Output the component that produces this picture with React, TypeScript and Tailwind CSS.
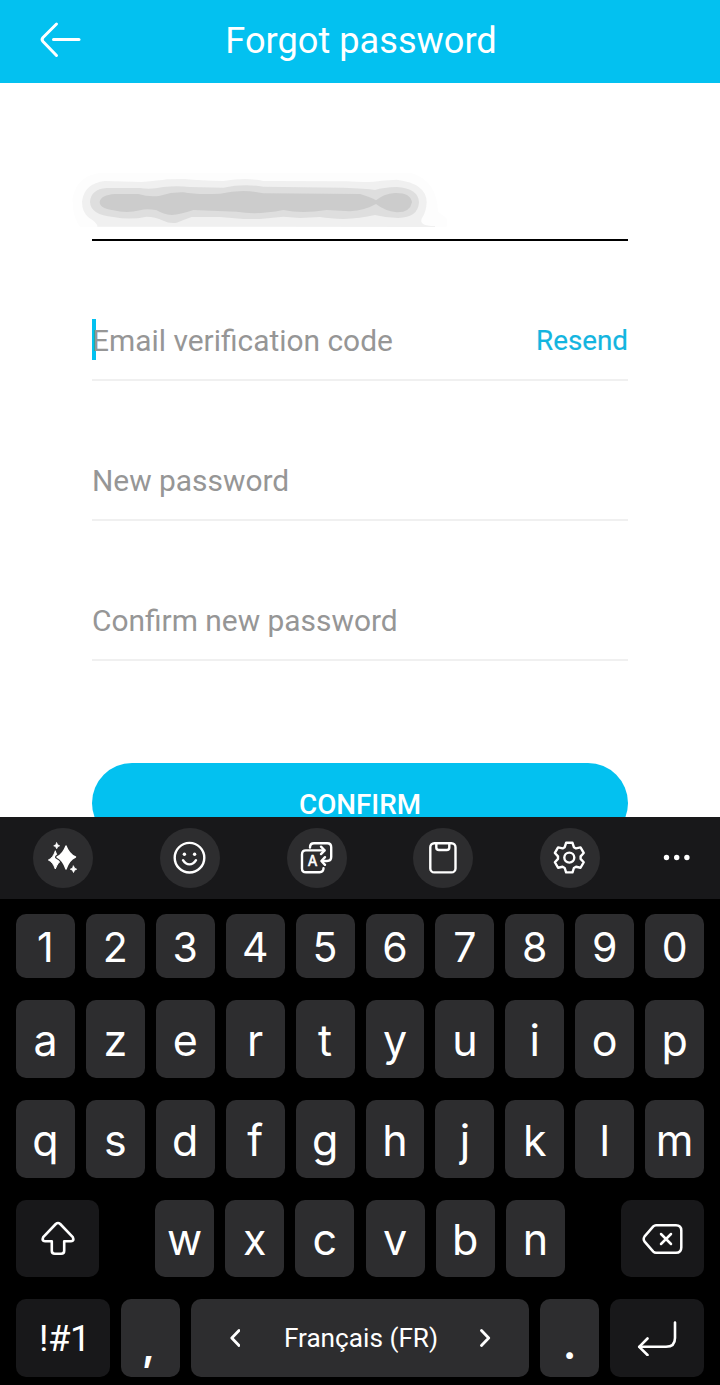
import type { ReactNode } from "react";

const numberRow = ["1", "2", "3", "4", "5", "6", "7", "8", "9", "0"];
const topRow = ["a", "z", "e", "r", "t", "y", "u", "i", "o", "p"];
const homeRow = ["q", "s", "d", "f", "g", "h", "j", "k", "l", "m"];
const bottomRow = ["w", "x", "c", "v", "b", "n"];

// one tooth of the cog, turned six times around the centre
const tooth = [
  [-4.6, -10.4],
  [-3.2, -14.8],
  [3.2, -14.8],
  [4.6, -10.4],
];

const cogPoints = [0, 60, 120, 180, 240, 300]
  .flatMap((deg) => {
    const a = (deg * Math.PI) / 180;
    return tooth.map(
      ([x, y]) =>
        `${(x * Math.cos(a) - y * Math.sin(a)).toFixed(2)},${(x * Math.sin(a) + y * Math.cos(a)).toFixed(2)}`
    );
  })
  .join(" ");

const Header = () => (
  <header className="flex h-[83px] shrink-0 items-center bg-[#03c1f0] text-white">
    <div className="flex w-[120px] pl-[38px]">
      <svg width="44" height="40" viewBox="0 0 44 40" className="-mt-1" fill="none" stroke="white" strokeWidth="3" strokeLinecap="round" strokeLinejoin="round">
        <path d="M18.5 4 L5 17.5 Q3.2 19.5 5 21.5 L18.5 35.5" />
        <path d="M15.5 19.5 H41" />
      </svg>
    </div>
    <h1 className="flex-1 pl-0.5 text-center text-[36.2px] leading-none">Forgot password</h1>
    <div className="w-[120px]" />
  </header>
);

const HiddenEmail = () => (
  <svg width="400" height="70" viewBox="0 0 1200 210" className="-ml-8 shrink-0">
    <path fill="#fdfdfd" d="M60 200 Q36 170 38 115 Q50 45 125 38 L1050 38 Q1132 60 1134 155 L1160 175 V200 Z" />
    <path fill="#f0f0f0" d="M112 200 Q112 188 88 174 Q66 158 66 125 Q72 70 135 63 L245 66 Q300 62 320 58 L375 57 Q420 62 490 63 Q525 57 555 57 Q585 58 610 63 L860 64 Q930 69 965 62 L1010 59 Q1100 70 1100 127 Q1099 155 1086 174 Q1074 198 1125 198 V201 Z" />
    <path fill="#dedede" d="M90 126 Q92 88 140 84 L240 84 Q270 90 310 81 Q350 76 390 81 L490 83 Q550 70 610 80 L850 83 Q920 85 945 90 Q970 82 1010 81 Q1075 85 1077 127 Q1074 173 1015 174 Q980 174 945 165 Q900 176 850 177 Q810 176 780 171 L720 174 L670 170 L600 177 L550 177 L480 171 L395 171 Q370 180 350 188 Q328 191 310 182 Q285 170 260 170 Q210 181 160 171 Q92 165 90 126 Z" />
    <path fill="#cccccc" d="M119 126 Q122 105 165 102 L235 102 Q270 112 300 107 Q335 96 370 97 Q410 105 480 101 Q550 86 610 100 L900 102 Q930 110 948 121 Q970 102 1005 99 Q1052 98 1056 127 Q1050 158 1010 157 Q975 153 948 132 Q915 151 870 154 L800 150 Q725 162 670 150 Q590 166 530 155 L400 150 Q360 164 335 165 Q310 163 290 151 Q260 144 240 151 Q200 161 160 151 Q119 145 119 126 Z" />
  </svg>
);

type FieldProps = {
  label: string;
  focused?: boolean;
  action?: string;
};

const Field = ({ label, focused, action }: FieldProps) => (
  <div className="relative flex h-[140px] shrink-0 items-end justify-between border-b-2 border-[#f0f0f0] pb-[18px] text-[29.9px] leading-[40px]">
    {focused && <span className="absolute bottom-[19px] left-0 h-[41px] w-1 bg-[#03c1f0]" />}
    <span className="relative text-[#969696]">{label}</span>
    {action && <span className="text-[27.8px] text-[#13b5e0] [-webkit-text-stroke:0.2px_#13b5e0]">{action}</span>}
  </div>
);

const ToolButton = ({ children }: { children: ReactNode }) => (
  <div className="size-[60px] shrink-0 rounded-full bg-[#2d2d2f]">
    <svg width="60" height="60" viewBox="0 0 60 60" fill="none" stroke="white" strokeWidth="2.4" strokeLinecap="round" strokeLinejoin="round">
      {children}
    </svg>
  </div>
);

const Toolbar = () => (
  <div className="flex h-[82px] items-center gap-[66.75px] bg-[#18181a] pl-[33px]">
    <ToolButton>
      <g fill="white" stroke="none">
        <path d="M22.3 23.2 Q24.4 30 29.5 32 Q24.8 34 22.3 41 Q20 34 15.4 32 Q20 30 22.3 23.2Z" stroke="white" strokeWidth="1" />
        <path stroke="#2d2d2f" strokeWidth="4" d="M33 18 Q36 26.2 42.5 29 Q36 31.8 33 41 Q30 31.8 24 29 Q30 26.2 33 18Z" />
        <path stroke="white" strokeWidth="1.4" d="M33 18 Q36 26.2 42.5 29 Q36 31.8 33 41 Q30 31.8 24 29 Q30 26.2 33 18Z" />
        <path d="M23.7 14.8 L24.7 16.8 L26.7 17.8 L24.7 18.8 L23.7 20.8 L22.7 18.8 L20.7 17.8 L22.7 16.8Z" stroke="white" strokeWidth="0.7" />
        <path d="M40.5 38 L41.6 40.2 L43.7 41.2 L41.6 42.2 L40.5 44.5 L39.4 42.2 L37.3 41.2 L39.4 40.2Z" stroke="white" strokeWidth="0.8" />
      </g>
    </ToolButton>
    <ToolButton>
      <circle cx="29.5" cy="29.7" r="14.8" />
      <path d="M23 32.2 Q25.5 36.4 29.5 36.4 Q33.5 36.4 36 32.2" />
      <circle cx="24.4" cy="26.2" r="1.7" fill="white" stroke="none" />
      <circle cx="34.6" cy="26.2" r="1.7" fill="white" stroke="none" />
    </ToolButton>
    <ToolButton>
      <path d="M23 19.5 Q23 15.3 27 15.3 H40.3 Q44.2 15.3 44.2 19.3 V29 Q44.2 33 40 33 H35.5" />
      <path d="M38 29.2 L34.4 33 L38 36.8" />
      <path d="M37.3 22.4 H18.8 Q15 22.4 15 26.4 V40.4 Q15 44.2 19 44.2 H32.6 Q36.5 44.2 36.5 40.3" />
      <path d="M34 18.7 L37.6 22.4 L34 26.1" />
      <text x="25.5" y="38.4" fill="white" stroke="white" strokeWidth="0.6" fontSize="14" textAnchor="middle">
        A
      </text>
    </ToolButton>
    <ToolButton>
      <rect x="17.3" y="15.2" width="25.2" height="29.2" rx="4" />
      <path d="M23.3 15.5 V19.4 Q23.3 22 26 22 H33.7 Q36.3 22 36.3 19.4 V15.5" />
    </ToolButton>
    <ToolButton>
      <polygon points={cogPoints} transform="translate(29.3 29.6)" />
      <circle cx="29.3" cy="29.6" r="5" />
    </ToolButton>
    <svg width="28" height="8" viewBox="0 0 28 8" className="-ml-[3.5px] shrink-0" fill="white">
      <circle cx="3.5" cy="3.5" r="2.7" />
      <circle cx="13.7" cy="3.5" r="2.7" />
      <circle cx="23.9" cy="3.5" r="2.7" />
    </svg>
  </div>
);

const Key = ({ children, className = "" }: { children: ReactNode; className?: string }) => (
  <div className={`flex h-full items-center justify-center rounded-[10px] ${className}`}>{children}</div>
);

const LetterRow = ({ keys }: { keys: string[] }) => (
  <div className="flex h-[78px] gap-[11px] text-[43px] leading-none">
    {keys.map((k) => (
      <Key key={k} className="flex-1 bg-[#2d2d2f] pt-0.5">
        {k}
      </Key>
    ))}
  </div>
);

const Keyboard = () => (
  <section className="h-[568px] shrink-0 bg-black font-['Inter',sans-serif] text-white">
    <Toolbar />
    <div className="flex flex-col gap-[22px] px-4 pt-[15px]">
      <div className="flex h-16 gap-[11px] text-[41px] leading-none">
        {numberRow.map((n) => (
          <Key key={n} className="flex-1 bg-[#2d2d2f] pt-0.5">
            {n}
          </Key>
        ))}
      </div>
      <LetterRow keys={topRow} />
      <LetterRow keys={homeRow} />

      <div className="flex h-[77px] justify-between text-[43px] leading-none">
        <Key className="w-[83px] bg-[#18181a]">
          <svg width="36" height="36" viewBox="0 0 36 36" fill="none" stroke="white" strokeWidth="2.6" strokeLinejoin="round">
            <path d="M15.8 3 Q18 1 20.2 3 L32.8 16.2 Q34.5 20 31 20.2 H24.2 V29.8 Q24.2 32.8 21.2 32.8 H14.8 Q11.8 32.8 11.8 29.8 V20.2 H5 Q1.5 20 3.2 16.2 Z" />
          </svg>
        </Key>
        <div className="flex gap-[11.2px]">
          {bottomRow.map((k) => (
            <Key key={k} className="w-[59px] bg-[#2d2d2f] pt-0.5">
              {k}
            </Key>
          ))}
        </div>
        <Key className="w-[83px] bg-[#18181a]">
          <svg width="42" height="32" viewBox="0 0 42 32" fill="none" stroke="white" strokeWidth="2.5" strokeLinecap="round" strokeLinejoin="round">
            <path d="M14 2.2 H34 Q39.3 2.2 39.3 7.5 V24.5 Q39.3 29.8 34 29.8 H14 Q12.5 29.8 11.3 28.6 L2.6 18.6 Q0.8 16 2.6 13.4 L11.3 3.4 Q12.5 2.2 14 2.2 Z" />
            <path d="M19 11 L29 21 M29 11 L19 21" />
          </svg>
        </Key>
      </div>

      <div className="flex h-[78px] gap-[11px]">
        <Key className="w-[94px] bg-[#18181a] pt-0.5 pl-[3px] font-['Roboto',sans-serif] text-[36.5px] tracking-[-0.5px]">!#1</Key>
        <Key className="w-[59px] bg-[#2d2d2f] pt-3.5 pr-1 text-[41px] font-semibold leading-none">,</Key>
        <Key className="flex-1 gap-[42px] bg-[#2d2d2f] font-['Roboto',sans-serif] text-[26.2px]">
          <svg width="11" height="18" viewBox="0 0 11 18" fill="none" stroke="white" strokeWidth="2.8" strokeLinecap="round" strokeLinejoin="round">
            <path d="M10 1.5 L2.8 9 L10 16.5" />
          </svg>
          <span className="whitespace-nowrap pt-0.5 pl-0.5">Français (FR)</span>
          <svg width="11" height="18" viewBox="0 0 11 18" fill="none" stroke="white" strokeWidth="2.8" strokeLinecap="round" strokeLinejoin="round">
            <path d="M1.5 1.5 L8.7 9 L1.5 16.5" />
          </svg>
        </Key>
        <Key className="w-[59px] bg-[#2d2d2f] pt-2.5 text-[43px] font-semibold leading-none">.</Key>
        <Key className="w-[94px] bg-[#18181a]">
          <svg width="40" height="36" viewBox="0 0 40 36" fill="none" stroke="white" strokeWidth="2.6" strokeLinecap="round" strokeLinejoin="round">
            <path d="M38 2.5 V18 Q38 26.8 29 26.8 H2.5" />
            <path d="M10.5 18.5 L2.2 26.8 L10.5 35" />
          </svg>
        </Key>
      </div>
    </div>
  </section>
);

export default function App() {
  return (
    <div className="flex h-[1385px] w-[720px] flex-col overflow-hidden bg-white font-['Roboto',sans-serif]">
      <Header />
      <main className="flex h-[734px] flex-col overflow-hidden px-[92px]">
        <div className="flex h-[158px] shrink-0 items-end border-b-2 border-black pb-[9px]">
          <HiddenEmail />
        </div>
        <Field label="Email verification code" focused action="Resend" />
        <Field label="New password" />
        <Field label="Confirm new password" />
        <button className="mt-[102px] h-20 shrink-0 rounded-full bg-[#03c1f0] pt-1 text-[27.8px] font-medium leading-[22px] text-white">
          CONFIRM
        </button>
      </main>
      <Keyboard />
    </div>
  );
}
